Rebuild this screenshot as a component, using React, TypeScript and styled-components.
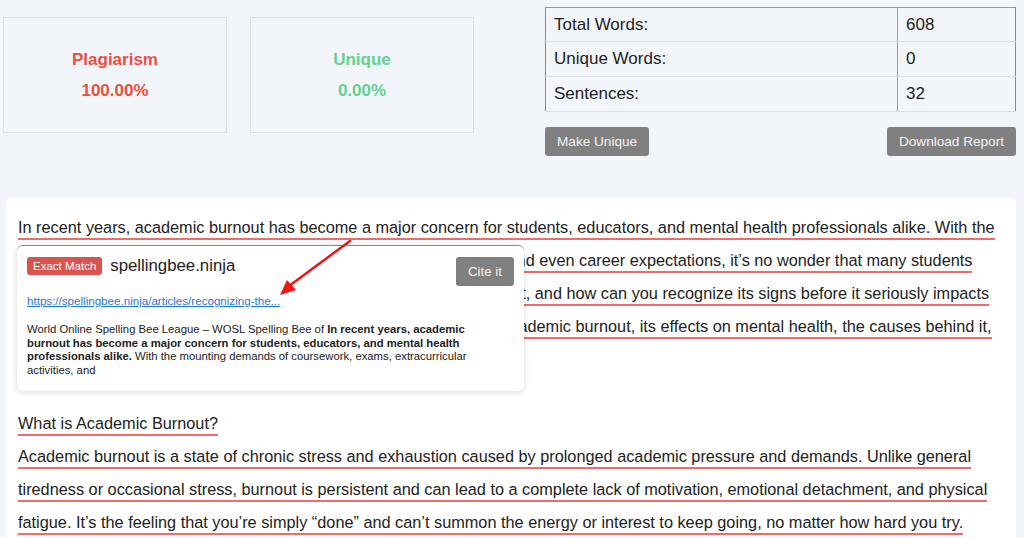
import React from "react";
import styled, { createGlobalStyle } from "styled-components";

const GlobalStyle = createGlobalStyle`
  html, body {
    margin: 0;
    padding: 0;
    background: #f2f5fa;
    font-family: "Liberation Sans", Arial, sans-serif;
    color: #222;
    overflow: hidden;
  }
`;

const Page = styled.div`
  width: 1024px;
  height: 538px;
  overflow: hidden;
  background: #f2f5fa;
`;

const TopRow = styled.div`
  display: flex;
  align-items: flex-start;
  padding: 7px 8px 0 3px;
`;

const StatCards = styled.div`
  display: flex;
  gap: 23px;
  margin-top: 10px;
`;

const StatCard = styled.div`
  width: 222px;
  height: 114px;
  border: 1px solid #dde1e6;
  display: flex;
  flex-direction: column;
  align-items: center;
  justify-content: center;
  gap: 11px;
  font-size: 17px;
  font-weight: bold;
  color: ${({ $color }: { $color: string }) => $color};
`;

const StatsColumn = styled.div`
  margin-left: auto;
  width: 471px;
`;

const Table = styled.table`
  width: 100%;
  border-collapse: collapse;
  font-size: 17px;
  border-top: 1px solid #999;
  border-left: 1px solid #888;
  border-right: 1px solid #888;
`;

const Row = styled.tr`
  &:first-child td {
    height: 33px;
  }
`;

const Cell = styled.td`
  height: 34px;
  padding: 0 0 0 8px;
  border-bottom: 1px solid #dcdfe3;
  &:first-child {
    width: 343px;
    border-right: 1px solid #999;
  }
`;

const Actions = styled.div`
  display: flex;
  justify-content: space-between;
  margin-top: 15px;
`;

const GrayButton = styled.button`
  border: none;
  border-radius: 3px;
  background: #808080;
  color: #f4f4f4;
  font-family: inherit;
  font-size: 13.6px;
  height: 29px;
  padding: 0 12px;
  cursor: pointer;
`;

const Panel = styled.div`
  position: relative;
  margin: 42px 8px 0 6px;
  background: #fff;
  border-radius: 6px;
  padding: 13px 16px 40px 12px;
  font-size: 16.3px;
  line-height: 33px;
`;

const Para = styled.p`
  margin: 0 0 ${({ $gap }: { $gap?: number }) => $gap ?? 0}px;
`;

const Mark = styled.span`
  padding-bottom: 2px;
  border-bottom: 2px solid #f26b6b;
`;

const Popup = styled.div`
  position: absolute;
  left: 11px;
  top: 47px;
  width: 487px;
  height: 125px;
  padding: 10px;
  background: #fff;
  border-top: 1px solid #ef5b5b;
  border-radius: 6px;
  box-shadow: 0 1px 6px rgba(0, 0, 0, 0.16);
  line-height: normal;
`;

const PopupHead = styled.div`
  display: flex;
  align-items: flex-start;
  gap: 8px;
  margin-top: 1px;
`;

const Badge = styled.span`
  background: #d9534f;
  color: #fff;
  font-size: 11.5px;
  border-radius: 3px;
  height: 18px;
  line-height: 18px;
  padding: 0 6px;
`;

const Domain = styled.span`
  font-size: 16.8px;
  line-height: 19px;
  margin-top: -1px;
`;

const CiteButton = styled(GrayButton)`
  margin-left: auto;
  font-size: 13.3px;
  padding: 0 12px;
`;

const SourceLink = styled.a`
  display: block;
  margin-top: 8px;
  font-size: 11.6px;
  color: #1f78d9;
  text-decoration: underline;
`;

const Snippet = styled.div`
  margin-top: 16px;
  max-width: 470px;
  font-size: 11.3px;
  line-height: 13.6px;
  color: #222;
`;

const Arrow = styled.svg`
  position: absolute;
  left: 0;
  top: 0;
  pointer-events: none;
`;

export default function App() {
  return (
    <Page>
      <GlobalStyle />
      <TopRow>
        <StatCards>
          <StatCard $color="#e8503f">
            <span>Plagiarism</span>
            <span>100.00%</span>
          </StatCard>
          <StatCard $color="#63d28f">
            <span>Unique</span>
            <span>0.00%</span>
          </StatCard>
        </StatCards>
        <StatsColumn>
          <Table>
            <tbody>
              <Row>
                <Cell>Total Words:</Cell>
                <Cell>608</Cell>
              </Row>
              <Row>
                <Cell>Unique Words:</Cell>
                <Cell>0</Cell>
              </Row>
              <Row>
                <Cell>Sentences:</Cell>
                <Cell>32</Cell>
              </Row>
            </tbody>
          </Table>
          <Actions>
            <GrayButton>Make Unique</GrayButton>
            <GrayButton>Download Report</GrayButton>
          </Actions>
        </StatsColumn>
      </TopRow>

      <Panel>
        <Para $gap={31}>
          <Mark>
            In recent years, academic burnout has become a major concern for students, educators, and mental
            health professionals alike.{" "}
          </Mark>
          <Mark>
            With the mounting demands of coursework, exams, extracurricular activities, and even career
            expectations, it’s no wonder that many students are feeling deeply overwhelmed.{" "}
          </Mark>
          <Mark>But what exactly is academic burnout, and how can you recognize its signs before it seriously impacts your well-being? </Mark>
          <Mark>
            In this article, we will explore the warning signs of academic burnout, its effects on mental health, the
            causes behind it, and practical strategies to overcome it.
          </Mark>
        </Para>
        <Para>
          <Mark>What is Academic Burnout?</Mark>
        </Para>
        <Para>
          <Mark>
            Academic burnout is a state of chronic stress and exhaustion caused by prolonged academic pressure and
            demands.{" "}
          </Mark>
          <Mark>
            Unlike general tiredness or occasional stress, burnout is persistent and can lead to a complete lack of
            motivation, emotional detachment, and physical fatigue.{" "}
          </Mark>
          <Mark>
            It’s the feeling that you’re simply “done” and can’t summon the energy or interest to keep going, no
            matter how hard you try.
          </Mark>
        </Para>

        <Popup>
          <PopupHead>
            <Badge>Exact Match</Badge>
            <Domain>spellingbee.ninja</Domain>
            <CiteButton>Cite it</CiteButton>
          </PopupHead>
          <SourceLink href="#">https://spellingbee.ninja/articles/recognizing-the...</SourceLink>
          <Snippet>
            World Online Spelling Bee League – WOSL Spelling Bee of{" "}
            <b>
              In recent years, academic burnout has become a major concern for students, educators, and mental
              health professionals alike.
            </b>{" "}
            With the mounting demands of coursework, exams, extracurricular activities, and
          </Snippet>
        </Popup>

        <Arrow width="400" height="120" viewBox="0 0 400 120">
          <line x1="344" y1="43" x2="283" y2="88" stroke="#f01414" strokeWidth="2.5" strokeLinecap="round" />
          <polygon points="274,97 281,82 290,92" fill="#f01414" />
        </Arrow>
      </Panel>
    </Page>
  );
}
